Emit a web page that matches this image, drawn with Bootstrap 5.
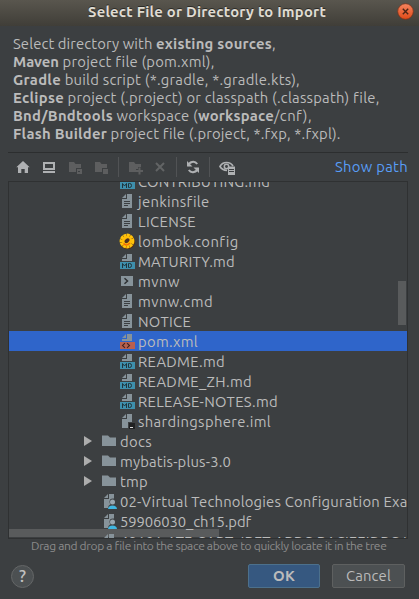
<!DOCTYPE html>
<html lang="en">
<head>
<meta charset="utf-8">
<meta name="viewport" content="width=device-width, initial-scale=1">
<title>Select File or Directory to Import</title>
<link href="https://cdn.jsdelivr.net/npm/bootstrap@5.3.0/dist/css/bootstrap.min.css" rel="stylesheet">
<style>
body{width:419px;height:599px;background:#3c3f41;color:#bbb;font-family:"Ubuntu","Noto Sans",sans-serif;font-size:14.8px;line-height:18px}
svg{display:block;flex:none}
[data-w]{display:inline-block;white-space:pre;flex:none}
.titlebar{height:26px;background:linear-gradient(#59564e,#403e38);color:#dfdbd2;padding:0 5px 3px 88px;text-shadow:0 -1px #2b2a26}
.intro{height:126px;padding:9px 0 0 13px}
.intro>div{height:18px}
.tools{height:29px;margin:0 11px 0 8px;border-top:1px solid #2c2e2f;width:400px;padding-left:7px}
.tools .sep{width:1px;height:20px;background:#515355}
.tools .cross{margin-left:7px}
.link-path{color:#589df6;text-decoration:none}
.tree{height:358px;width:400px;margin-left:8px;border:1px solid #2f3132}
.tree-list{margin-top:-11px;position:relative;z-index:1}
.tree-row{height:20px;line-height:20px;padding-left:110px}
.tree-row.dir{padding-left:74px}
.tree-row.top-file{padding-left:92px}
.tree-row svg{margin-right:3px}
.tree-row span{padding-top:1px;height:20px}
.tree-row.dir .arrow{margin-right:8px}
.chosen{background:#2f65ca}
.bar-v{width:8px;height:44px;right:1px;top:99px;background:#595b5c}
.bar-h{height:8px;width:210px;left:0;bottom:1px;background:#595b5c}
.hint{height:15px;line-height:13px;font-size:12px;color:#8c8c8c;padding-left:31px}
.actions{height:45px;padding:10px 14px 11px 11px}
.help{width:23px;height:23px;border:1px solid #646667;background:#4c5052;font-size:17px;font-weight:500;line-height:20px;color:#c0c0c0}
.act{height:24px;width:73px;border-radius:2px;font-size:14.8px;line-height:20px;padding:0;color:#bbb;background:#4c5052;border:1px solid #5e6060}
.act.main{width:72px;background:#365880;border-color:#4c708c;font-weight:700}
.act.second{margin-left:12px}
</style>
<script src="https://cdn.jsdelivr.net/npm/bootstrap@5.3.0/dist/js/bootstrap.bundle.min.js"></script>
</head>
<body class="overflow-hidden m-0">
<svg width="0" height="0" class="position-absolute">
<symbol id="text" viewBox="0 0 16 16"><path fill="#87939a" d="M7 1v4H3zM8 1h5v14H3V6h5z"/><path stroke="#3c3f41" d="M5 8.5h6M5 10.5h6M5 12.5h4"/></symbol>
<symbol id="md" viewBox="0 0 16 16"><path fill="#87939a" d="M7 1v4H3zM8 1h5v7H3V6h5z"/><path fill="#3e8fad" d="M1 9h15v7H1z"/><path fill="none" stroke="#20343c" d="M3.5 15v-4.5l2 2.5 2-2.5V15M9.5 10.5h1.2q1.8 0 1.8 2t-1.8 2H9.5z"/></symbol>
<symbol id="xml" viewBox="0 0 16 16"><path fill="#87939a" d="M7 1v4H3zM8 1h5v7H3V6h5z"/><path fill="#b8604f" d="M1 9h15v7H1z"/><path fill="none" stroke="#43231e" stroke-width="1.1" d="M6 10.2 3.5 12.5 6 14.8M8 10.2l2.5 2.3L8 14.8"/></symbol>
<symbol id="shell" viewBox="0 0 16 16"><path fill="#87939a" d="M2 3h12v10H2z"/><path fill="none" stroke="#2d3032" stroke-width="1.5" d="M5.5 5.3 8.5 8l-3 2.7"/></symbol>
<symbol id="iml" viewBox="0 0 16 16"><path fill="#87939a" d="M7 1v4H3zM8 1h5v8H9v6H3V6h5z"/><path fill="#202122" d="M10 10h6v6h-6z"/><path fill="#ddd" d="M11 14h3v1h-3z"/></symbol>
<symbol id="flower" viewBox="0 0 16 16"><circle cx="8.5" cy="8.8" r="6" fill="none" stroke="#5f2b0c" stroke-width="3" stroke-dasharray="2.4 .75"/><circle cx="8" cy="8" r="5.7" fill="none" stroke="#ffc40c" stroke-width="3.4" stroke-dasharray="2.9 .35"/><circle cx="8" cy="8" r="5" fill="#ffbd08"/><path d="M4.500 10.500q3 3 6.500-.5" fill="none" stroke="#f56a06" stroke-width="1.500"/><ellipse cx="8.200" cy="7.800" rx="2.900" ry="2" transform="rotate(-40 8 8)" fill="#4b3024"/></symbol>
<symbol id="folder" viewBox="0 0 16 16"><path fill="#87939a" d="M1 2.500h6l2 2h6V13H1z"/></symbol>
<symbol id="user" viewBox="0 0 16 16"><path fill="#87939a" d="M7 1v4H3zM8 1h5v4.500Q8.500 5 8.500 8.800q0 1.500 1 2.500Q7 12.500 7 15H3V6h5z"/><circle cx="11.500" cy="9" r="2.500" fill="#9aa7b0"/><path fill="#40b6e0" d="M7 16q.3-3.500 4.500-3.500T16 16z"/></symbol>
<symbol id="arrow" viewBox="0 0 10 12"><path fill="#adadad" d="M1 1l8 5-8 5z"/></symbol>
</svg>

<header class="titlebar d-flex align-items-center justify-content-between fw-bold">
  <span data-w="238">Select File or Directory to Import</span>
  <svg width="17" height="17" viewBox="0 0 17 17"><defs><linearGradient id="cg" x2="0" y2="1"><stop stop-color="#f58560"/><stop offset="1" stop-color="#df4a17"/></linearGradient></defs><circle cx="8.500" cy="8.500" r="7.800" fill="url(#cg)" stroke="#7b3018" stroke-width=".7"/><path stroke="#4b2414" stroke-width="1.400" d="m5.800 5.800 5.400 5.400m0-5.400-5.400 5.400"/></svg>
</header>

<section class="intro">
  <div class="d-flex"><span data-w="143">Select directory with </span><b data-w="116">existing sources</b><span>,</span></div>
  <div class="d-flex"><b data-w="46">Maven</b><span data-w="155"> project file (pom.xml),</span></div>
  <div class="d-flex"><b data-w="48">Gradle</b><span data-w="239"> build script (*.gradle, *.gradle.kts),</span></div>
  <div class="d-flex"><b data-w="51">Eclipse</b><span data-w="315"> project (.project) or classpath (.classpath) file,</span></div>
  <div class="d-flex"><b data-w="100">Bnd/Bndtools</b><span data-w="85"> workspace (</span><b data-w="76">workspace</b><span data-w="38">/cnf),</span></div>
  <div class="d-flex"><b data-w="94">Flash Builder</b><span data-w="233"> project file (.project, *.fxp, *.fxpl).</span></div>
</section>

<nav class="tools d-flex align-items-center">
  <svg width="16" height="16" viewBox="0 0 16 16"><path fill="#afb1b3" d="M8 2l6.700 6.300H13V14H9.700v-4H6.300v4H3V8.300H1.300z"/></svg>
  <svg class="ms-2 me-2" width="20" height="16" viewBox="0 0 20 16"><path fill="#afb1b3" fill-rule="evenodd" d="M4 3h12v8H4zm2 2v4h8V5zM4 12h12v2H4z"/></svg>
  <svg width="17" height="16" viewBox="0 0 17 16"><path fill="#5d5e5f" d="M2 3h5l1.500 2H14v4H9v4H2zM10 10h5v5h-5z"/><path fill="#3c3f41" d="M11 12h2v1h-2z"/></svg>
  <svg class="ms-2 me-2" width="18" height="16" viewBox="0 0 18 16"><path fill="#5d5e5f" d="M3 3h5l1.500 2H15v4h-5v4H3zM11 10h5v5h-5z"/></svg>
  <span class="sep"></span>
  <svg class="ms-2" width="18" height="16" viewBox="0 0 18 16"><path fill="#5d5e5f" d="M2 3h5l1.500 2H14v3h-3v2H9v3H2z"/><path stroke="#5d5e5f" stroke-width="2" d="M12.500 8.500v7M9 12h7"/></svg>
  <svg class="cross" width="16" height="16" viewBox="0 0 16 16"><path stroke="#626465" stroke-width="2" d="m4 4 8 8m0-8-8 8"/></svg>
  <span class="sep ms-2"></span>
  <svg class="ms-2" width="16" height="16" viewBox="0 0 16 16"><path fill="none" stroke="#afb1b3" stroke-width="2" d="M3.200 7A5 5 0 0 1 12.200 5M12.800 9a5 5 0 0 1-9 2"/><path fill="#afb1b3" d="M2 2v5.500h5.500zM14 14V8.500H8.500z"/></svg>
  <span class="sep ms-2"></span>
  <svg class="ms-2" width="18" height="16" viewBox="0 0 18 16"><path fill="none" stroke="#afb1b3" stroke-width="1.700" d="M9 11.500Q4 11 2 7.500 4 3.500 8.500 3.500T15 7"/><circle cx="8.500" cy="7.500" r="2.200" fill="none" stroke="#afb1b3" stroke-width="1.500"/><path fill="#afb1b3" d="M10 7.500h7V16h-7z"/><path stroke="#3c3f41" d="M11 10.500h5M11 12.500h5"/></svg>
  <a class="link-path ms-auto" href="#"><span data-w="73">Show path</span></a>
</nav>

<main class="tree position-relative overflow-hidden">
  <div class="tree-list">
    <div class="tree-row d-flex align-items-center"><svg width="16" height="16"><use href="#md"/></svg><span data-w="132">CONTRIBUTING.md</span></div>
    <div class="tree-row d-flex align-items-center"><svg width="16" height="16"><use href="#text"/></svg><span data-w="71">jenkinsfile</span></div>
    <div class="tree-row d-flex align-items-center"><svg width="16" height="16"><use href="#text"/></svg><span data-w="58">LICENSE</span></div>
    <div class="tree-row d-flex align-items-center"><svg width="16" height="16"><use href="#flower"/></svg><span data-w="100">lombok.config</span></div>
    <div class="tree-row d-flex align-items-center"><svg width="16" height="16"><use href="#md"/></svg><span data-w="97">MATURITY.md</span></div>
    <div class="tree-row d-flex align-items-center"><svg width="16" height="16"><use href="#shell"/></svg><span data-w="42">mvnw</span></div>
    <div class="tree-row d-flex align-items-center"><svg width="16" height="16"><use href="#text"/></svg><span data-w="75">mvnw.cmd</span></div>
    <div class="tree-row d-flex align-items-center"><svg width="16" height="16"><use href="#text"/></svg><span data-w="53">NOTICE</span></div>
    <div class="tree-row chosen d-flex align-items-center"><svg width="16" height="16"><use href="#xml"/></svg><span data-w="60">pom.xml</span></div>
    <div class="tree-row d-flex align-items-center"><svg width="16" height="16"><use href="#md"/></svg><span data-w="87">README.md</span></div>
    <div class="tree-row d-flex align-items-center"><svg width="16" height="16"><use href="#md"/></svg><span data-w="114">README_ZH.md</span></div>
    <div class="tree-row d-flex align-items-center"><svg width="16" height="16"><use href="#md"/></svg><span data-w="140">RELEASE-NOTES.md</span></div>
    <div class="tree-row d-flex align-items-center"><svg width="16" height="16"><use href="#iml"/></svg><span data-w="133">shardingsphere.iml</span></div>
    <div class="tree-row dir d-flex align-items-center"><svg class="arrow" width="10" height="12"><use href="#arrow"/></svg><svg width="16" height="16"><use href="#folder"/></svg><span data-w="32">docs</span></div>
    <div class="tree-row dir d-flex align-items-center"><svg class="arrow" width="10" height="12"><use href="#arrow"/></svg><svg width="16" height="16"><use href="#folder"/></svg><span data-w="111">mybatis-plus-3.0</span></div>
    <div class="tree-row dir d-flex align-items-center"><svg class="arrow" width="10" height="12"><use href="#arrow"/></svg><svg width="16" height="16"><use href="#folder"/></svg><span data-w="28">tmp</span></div>
    <div class="tree-row top-file d-flex align-items-center"><svg width="16" height="16"><use href="#user"/></svg><span data-w="287">02-Virtual Technologies Configuration Exa</span></div>
    <div class="tree-row top-file d-flex align-items-center"><svg width="16" height="16"><use href="#user"/></svg><span data-w="131">59906030_ch15.pdf</span></div>
    <div class="tree-row top-file d-flex align-items-center"><svg width="16" height="16"><use href="#user"/></svg><span data-w="287">49101-ATF-CART-JBET-ABBC-BACIEEIDBC-I</span></div>
  </div>
  <div class="bar-v position-absolute"></div>
  <div class="bar-h position-absolute"></div>
</main>

<div class="hint"><span data-w="355">Drag and drop a file into the space above to quickly locate it in the tree</span></div>

<footer class="actions d-flex align-items-center">
  <button class="help rounded-circle p-0 text-center" type="button">?</button>
  <button class="btn act main ms-auto" type="button"><span data-w="22">OK</span></button>
  <button class="btn act second" type="button"><span data-w="45">Cancel</span></button>
</footer>
<script>
document.querySelectorAll('[data-w]').forEach(function (el) {
  var want = +el.dataset.w;
  var have = el.getBoundingClientRect().width;
  el.style.letterSpacing = ((want - have) / el.textContent.length).toFixed(3) + 'px';
});
</script>
</body>
</html>
